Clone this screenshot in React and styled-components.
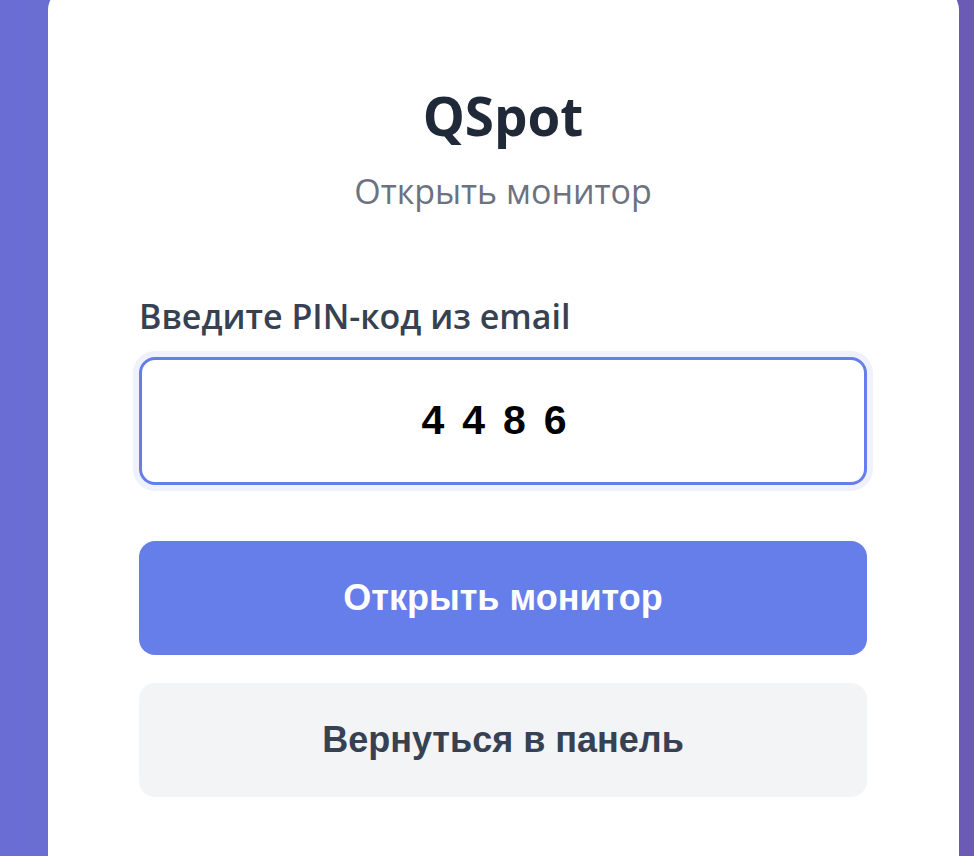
import React, { useState } from "react";
import styled, { createGlobalStyle } from "styled-components";

const GlobalStyle = createGlobalStyle`
  html, body {
    margin: 0;
    padding: 0;
    height: 100%;
  }
  body {
    background: linear-gradient(90deg, #6a6dd3 0%, #6a68c6 50%, #6c5bb4 100%);
    font-family: "Open Sans", "Noto Sans", sans-serif;
    overflow: hidden;
  }
`;

const Page = styled.div`
  min-height: 100vh;
  padding-left: 48px;
  box-sizing: border-box;
`;

const Card = styled.div`
  width: 911px;
  margin-top: -12px;
  min-height: 900px;
  background: #ffffff;
  border-radius: 22px;
  box-sizing: border-box;
  padding: 96px 92px 60px 91px;
`;

const Title = styled.h1`
  margin: 0;
  text-align: center;
  font-size: 53px;
  font-weight: 700;
  line-height: 1.2;
  color: #1f2937;
`;

const Subtitle = styled.p`
  margin: 21px 0 0;
  text-align: center;
  font-size: 34px;
  line-height: 1.3;
  color: #6b7280;
`;

const Field = styled.div`
  margin-top: 81px;
  display: flex;
  flex-direction: column;
  gap: 19px;
`;

const Label = styled.label`
  font-size: 34px;
  font-weight: 600;
  line-height: 1.3;
  color: #374151;
`;

const PinInput = styled.input`
  box-sizing: border-box;
  width: 100%;
  height: 128px;
  border: 3px solid #667eea;
  border-radius: 16px;
  box-shadow: 0 0 0 6px rgba(102, 126, 234, 0.1);
  outline: none;
  text-align: center;
  font-family: "Liberation Sans", Arial, sans-serif;
  font-size: 41px;
  font-weight: 700;
  letter-spacing: 18px;
  color: #000000;
  background: #ffffff;
`;

const Actions = styled.div`
  margin-top: 56px;
  display: flex;
  flex-direction: column;
  gap: 28px;
`;

const Button = styled.button`
  height: 114px;
  width: 100%;
  border: none;
  border-radius: 16px;
  font-family: "Liberation Sans", Arial, sans-serif;
  font-size: 36px;
  font-weight: 700;
  cursor: pointer;
  background: ${(p) => (p.$variant === "secondary" ? "#f3f4f6" : "#667eea")};
  color: ${(p) => (p.$variant === "secondary" ? "#374151" : "#ffffff")};
`;

export default function App() {
  const [pin, setPin] = useState("4486");
  return (
    <>
      <GlobalStyle />
      <Page>
        <Card>
          <Title>QSpot</Title>
          <Subtitle>Открыть монитор</Subtitle>
          <Field>
            <Label htmlFor="pin">Введите PIN-код из email</Label>
            <PinInput
              id="pin"
              value={pin}
              maxLength={4}
              onChange={(e) => setPin(e.target.value)}
            />
          </Field>
          <Actions>
            <Button>Открыть монитор</Button>
            <Button $variant="secondary">Вернуться в панель</Button>
          </Actions>
        </Card>
      </Page>
    </>
  );
}
